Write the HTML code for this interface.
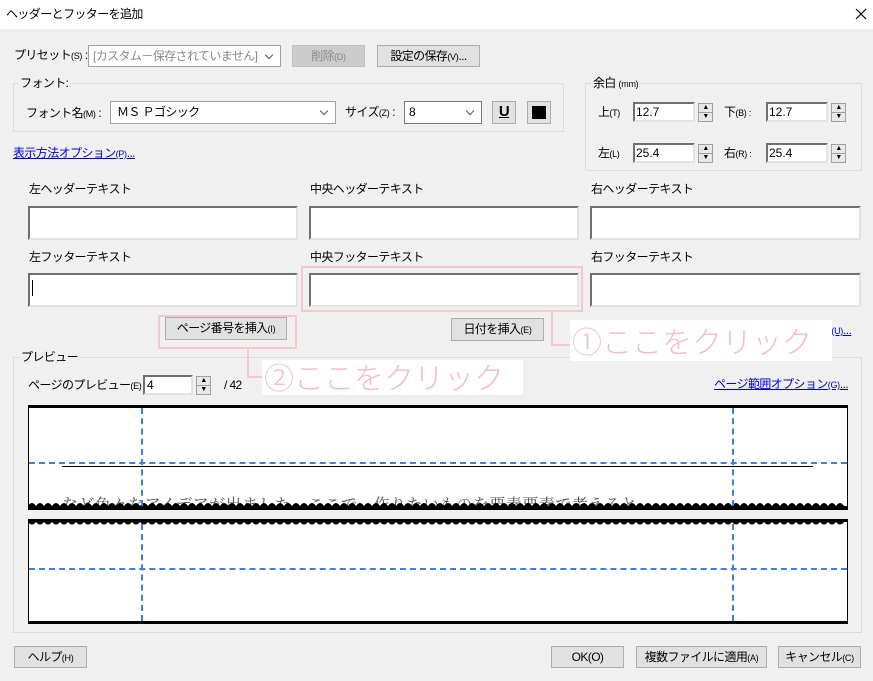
<!DOCTYPE html>
<html><head><meta charset="utf-8"><style>
*{box-sizing:border-box;margin:0;padding:0}
body{width:873px;height:681px;background:#f0f0f0;font-family:"Liberation Sans","Noto Sans CJK JP",sans-serif;font-size:12px;letter-spacing:-0.6px;color:#000;position:relative;overflow:hidden}
.a{position:absolute;white-space:nowrap}
.t{line-height:14px}
.s{font-size:9px;letter-spacing:-0.3px}
.inp{position:absolute;background:#fff;border-style:solid;border-width:2px;border-color:#707070 #e3e3e3 #e3e3e3 #707070;letter-spacing:0}
.sel{position:absolute;background:#fff;border:1px solid #a0a0a0;padding:2px 4px;line-height:16px}
.sel:after{content:"";position:absolute;right:8px;top:6px;width:5px;height:5px;border-right:1px solid #555;border-bottom:1px solid #555;transform:rotate(45deg)}
.btn{position:absolute;background:#e1e1e1;border:1px solid #adadad;text-align:center;line-height:20px}
.grp{position:absolute;border:1px solid #dcdcdc}
.leg{position:absolute;background:#f0f0f0;padding:0 2px;line-height:14px}
.lnk{color:#0000ee;text-decoration:underline}
.spin{position:absolute;width:15px;border:1px solid #a0a0a0;background:#e8e8e8}
.spin div{height:50%;border-bottom:1px solid #a0a0a0;font-size:7px;line-height:8px;text-align:center}
.spin div:last-child{border:none}
.ann{position:absolute;background:#fff;color:#f7bcc6;font-size:30px;line-height:40px;padding-left:2px;font-family:"Noto Sans CJK JP",sans-serif;font-weight:300;letter-spacing:0}
.pk{position:absolute;border:2px solid #f6c7cd}
.vd{position:absolute;width:0;border-left:2px dashed #3a80e8}
.hd{position:absolute;height:0;border-top:2px dashed #3a80e8}
</style></head><body>
<div class="a" style="left:0;top:0;width:873px;height:29px;background:#fff"></div>
<div class="a t" style="left:6px;top:7px">ヘッダーとフッターを追加</div>
<svg class="a" style="left:855px;top:8px" width="12" height="12"><path d="M1 1L11 11M11 1L1 11" stroke="#000" stroke-width="1.2"/></svg>

<div class="a t" style="left:14px;top:48px">プリセット<span class="s">(S)</span> :</div>
<div class="sel" style="left:88px;top:45px;width:193px;height:22px;color:#888">[カスタム－保存されていません]</div>
<div class="btn" style="left:292px;top:45px;width:73px;height:22px;background:#cccccc;border-color:#bfbfbf;color:#888">削除<span class="s">(D)</span></div>
<div class="btn" style="left:377px;top:45px;width:103px;height:22px">設定の保存<span class="s">(V)</span>...</div>

<div class="grp" style="left:13px;top:83px;width:551px;height:49px"></div>
<div class="leg" style="left:18px;top:76px">フォント:</div>
<div class="a t" style="left:26px;top:106px">フォント名<span class="s">(M)</span> :</div>
<div class="sel" style="left:110px;top:101px;width:226px;height:23px;padding-left:6px">ＭＳ Ｐゴシック</div>
<div class="a t" style="left:345px;top:105px">サイズ<span class="s">(Z)</span> :</div>
<div class="sel" style="left:404px;top:101px;width:78px;height:23px;border-color:#7a7a7a">8</div>
<div class="btn" style="left:492px;top:101px;width:24px;height:23px;font-weight:bold;font-size:15px;text-decoration:underline">U</div>
<div class="btn" style="left:527px;top:101px;width:24px;height:23px"><div style="position:absolute;left:4px;top:4px;width:14px;height:13px;background:#000"></div></div>
<div class="a t lnk" style="left:13px;top:146px">表示方法オプション<span class="s">(P)</span>...</div>

<div class="grp" style="left:585px;top:83px;width:277px;height:88px"></div>
<div class="leg" style="left:591px;top:76px">余白 <span class="s">(mm)</span></div>
<div class="a t" style="left:598px;top:105px">上<span class="s">(T)</span></div>
<div class="inp" style="left:633px;top:102px;width:62px;height:20px;padding-left:1px;line-height:16px">12.7</div>
<div class="spin" style="left:698px;top:103px;height:19px"><div>▲</div><div>▼</div></div>
<div class="a t" style="left:724px;top:105px">下<span class="s">(B) :</span></div>
<div class="inp" style="left:766px;top:102px;width:62px;height:20px;padding-left:1px;line-height:16px">12.7</div>
<div class="spin" style="left:831px;top:103px;height:19px"><div>▲</div><div>▼</div></div>
<div class="a t" style="left:598px;top:146px">左<span class="s">(L)</span></div>
<div class="inp" style="left:633px;top:143px;width:62px;height:20px;padding-left:1px;line-height:16px">25.4</div>
<div class="spin" style="left:698px;top:144px;height:19px"><div>▲</div><div>▼</div></div>
<div class="a t" style="left:724px;top:146px">右<span class="s">(R) :</span></div>
<div class="inp" style="left:766px;top:143px;width:62px;height:20px;padding-left:1px;line-height:16px">25.4</div>
<div class="spin" style="left:831px;top:144px;height:19px"><div>▲</div><div>▼</div></div>

<div class="a t" style="left:29px;top:182px">左ヘッダーテキスト</div>
<div class="a t" style="left:310px;top:182px">中央ヘッダーテキスト</div>
<div class="a t" style="left:591px;top:182px">右ヘッダーテキスト</div>
<div class="inp" style="left:28px;top:206px;width:270px;height:34px"></div>
<div class="inp" style="left:309px;top:206px;width:270px;height:34px"></div>
<div class="inp" style="left:590px;top:206px;width:271px;height:34px"></div>
<div class="a t" style="left:29px;top:250px">左フッターテキスト</div>
<div class="a t" style="left:310px;top:250px">中央フッターテキスト</div>
<div class="a t" style="left:591px;top:250px">右フッターテキスト</div>
<div class="inp" style="left:28px;top:273px;width:270px;height:34px"><div style="position:absolute;left:2px;top:5px;width:1px;height:16px;background:#000"></div></div>
<div class="inp" style="left:309px;top:273px;width:270px;height:34px"></div>
<div class="inp" style="left:590px;top:273px;width:271px;height:34px"></div>

<div class="a t lnk" style="left:820px;top:323px">式<span class="s">(U)</span>...</div>
<div class="btn" style="left:165px;top:317px;width:122px;height:23px;line-height:21px">ページ番号を挿入<span class="s">(I)</span></div>
<div class="btn" style="left:451px;top:318px;width:93px;height:23px;line-height:21px">日付を挿入<span class="s">(E)</span></div>

<div class="grp" style="left:13px;top:357px;width:849px;height:276px"></div>
<div class="leg" style="left:19px;top:350px">プレビュー</div>
<div class="a t" style="left:28px;top:378px">ページのプレビュー<span class="s">(E)</span></div>
<div class="inp" style="left:143px;top:375px;width:50px;height:20px;padding-left:2px;line-height:16px">4</div>
<div class="spin" style="left:196px;top:376px;height:19px"><div>▲</div><div>▼</div></div>
<div class="a t" style="left:224px;top:378px">/ 42</div>
<div class="a t lnk" style="left:714px;top:377px">ページ範囲オプション<span class="s">(G)</span>...</div>

<div class="a" style="left:28px;top:405px;width:820px;height:104px;background:#fff;border:1px solid #000;border-top:3px solid #000;border-bottom:none;overflow:hidden">
 <div class="a" style="left:33px;top:58px;width:751px;height:1px;background:#000"></div>
 <div class="a" style="left:33px;top:84px;font-size:16px;color:#555;font-family:'Noto Serif CJK SC',serif;letter-spacing:0.5px">など色々なアイデアが出ました。ここで、作りたいものを要素要素で考えると</div>
</div>
<svg class="a" style="left:28px;top:500px" width="820" height="10"><path d="M0 10 L0 6 Q4 0 8 6 Q12 0 16 6 Q20 0 24 6 Q28 0 32 6 Q36 0 40 6 Q44 0 48 6 Q52 0 56 6 Q60 0 64 6 Q68 0 72 6 Q76 0 80 6 Q84 0 88 6 Q92 0 96 6 Q100 0 104 6 Q108 0 112 6 Q116 0 120 6 Q124 0 128 6 Q132 0 136 6 Q140 0 144 6 Q148 0 152 6 Q156 0 160 6 Q164 0 168 6 Q172 0 176 6 Q180 0 184 6 Q188 0 192 6 Q196 0 200 6 Q204 0 208 6 Q212 0 216 6 Q220 0 224 6 Q228 0 232 6 Q236 0 240 6 Q244 0 248 6 Q252 0 256 6 Q260 0 264 6 Q268 0 272 6 Q276 0 280 6 Q284 0 288 6 Q292 0 296 6 Q300 0 304 6 Q308 0 312 6 Q316 0 320 6 Q324 0 328 6 Q332 0 336 6 Q340 0 344 6 Q348 0 352 6 Q356 0 360 6 Q364 0 368 6 Q372 0 376 6 Q380 0 384 6 Q388 0 392 6 Q396 0 400 6 Q404 0 408 6 Q412 0 416 6 Q420 0 424 6 Q428 0 432 6 Q436 0 440 6 Q444 0 448 6 Q452 0 456 6 Q460 0 464 6 Q468 0 472 6 Q476 0 480 6 Q484 0 488 6 Q492 0 496 6 Q500 0 504 6 Q508 0 512 6 Q516 0 520 6 Q524 0 528 6 Q532 0 536 6 Q540 0 544 6 Q548 0 552 6 Q556 0 560 6 Q564 0 568 6 Q572 0 576 6 Q580 0 584 6 Q588 0 592 6 Q596 0 600 6 Q604 0 608 6 Q612 0 616 6 Q620 0 624 6 Q628 0 632 6 Q636 0 640 6 Q644 0 648 6 Q652 0 656 6 Q660 0 664 6 Q668 0 672 6 Q676 0 680 6 Q684 0 688 6 Q692 0 696 6 Q700 0 704 6 Q708 0 712 6 Q716 0 720 6 Q724 0 728 6 Q732 0 736 6 Q740 0 744 6 Q748 0 752 6 Q756 0 760 6 Q764 0 768 6 Q772 0 776 6 Q780 0 784 6 Q788 0 792 6 Q796 0 800 6 Q804 0 808 6 Q812 0 816 6 L820 6 L820 10 Z" fill="#000"/></svg>
<div class="a" style="left:28px;top:520px;width:820px;height:104px;background:#fff;border:1px solid #000;border-bottom:3px solid #000;border-top:none"></div>
<svg class="a" style="left:28px;top:519px" width="820" height="8"><path d="M0 0 L820 0 L820 3 L816 3 Q812 8 808 3 Q804 8 800 3 Q796 8 792 3 Q788 8 784 3 Q780 8 776 3 Q772 8 768 3 Q764 8 760 3 Q756 8 752 3 Q748 8 744 3 Q740 8 736 3 Q732 8 728 3 Q724 8 720 3 Q716 8 712 3 Q708 8 704 3 Q700 8 696 3 Q692 8 688 3 Q684 8 680 3 Q676 8 672 3 Q668 8 664 3 Q660 8 656 3 Q652 8 648 3 Q644 8 640 3 Q636 8 632 3 Q628 8 624 3 Q620 8 616 3 Q612 8 608 3 Q604 8 600 3 Q596 8 592 3 Q588 8 584 3 Q580 8 576 3 Q572 8 568 3 Q564 8 560 3 Q556 8 552 3 Q548 8 544 3 Q540 8 536 3 Q532 8 528 3 Q524 8 520 3 Q516 8 512 3 Q508 8 504 3 Q500 8 496 3 Q492 8 488 3 Q484 8 480 3 Q476 8 472 3 Q468 8 464 3 Q460 8 456 3 Q452 8 448 3 Q444 8 440 3 Q436 8 432 3 Q428 8 424 3 Q420 8 416 3 Q412 8 408 3 Q404 8 400 3 Q396 8 392 3 Q388 8 384 3 Q380 8 376 3 Q372 8 368 3 Q364 8 360 3 Q356 8 352 3 Q348 8 344 3 Q340 8 336 3 Q332 8 328 3 Q324 8 320 3 Q316 8 312 3 Q308 8 304 3 Q300 8 296 3 Q292 8 288 3 Q284 8 280 3 Q276 8 272 3 Q268 8 264 3 Q260 8 256 3 Q252 8 248 3 Q244 8 240 3 Q236 8 232 3 Q228 8 224 3 Q220 8 216 3 Q212 8 208 3 Q204 8 200 3 Q196 8 192 3 Q188 8 184 3 Q180 8 176 3 Q172 8 168 3 Q164 8 160 3 Q156 8 152 3 Q148 8 144 3 Q140 8 136 3 Q132 8 128 3 Q124 8 120 3 Q116 8 112 3 Q108 8 104 3 Q100 8 96 3 Q92 8 88 3 Q84 8 80 3 Q76 8 72 3 Q68 8 64 3 Q60 8 56 3 Q52 8 48 3 Q44 8 40 3 Q36 8 32 3 Q28 8 24 3 Q20 8 16 3 Q12 8 8 3 Q4 8 0 3 Z" fill="#000"/></svg>
<div class="vd" style="left:141px;top:408px;height:98px"></div>
<div class="vd" style="left:732px;top:408px;height:98px"></div>
<div class="hd" style="left:29px;top:462px;width:818px"></div>
<div class="vd" style="left:141px;top:524px;height:97px"></div>
<div class="vd" style="left:732px;top:524px;height:97px"></div>
<div class="hd" style="left:29px;top:568px;width:818px"></div>

<div class="pk" style="left:301px;top:266px;width:282px;height:46px"></div>
<div class="a" style="left:551px;top:311px;width:21px;height:35px;border-left:2px solid #f6c7cd;border-bottom:2px solid #f6c7cd"></div>
<div class="ann" style="left:570px;top:320px;width:262px;height:41px">①ここをクリック</div>
<div class="pk" style="left:158px;top:315px;width:139px;height:34px"></div>
<div class="a" style="left:247px;top:348px;width:16px;height:30px;border-left:2px solid #f6c7cd;border-bottom:2px solid #f6c7cd"></div>
<div class="ann" style="left:262px;top:360px;width:261px;height:35px;line-height:33px">②ここをクリック</div>

<div class="btn" style="left:14px;top:646px;width:73px;height:22px">ヘルプ<span class="s">(H)</span></div>
<div class="btn" style="left:551px;top:646px;width:73px;height:22px">OK(O)</div>
<div class="btn" style="left:636px;top:646px;width:131px;height:22px">複数ファイルに適用<span class="s">(A)</span></div>
<div class="btn" style="left:778px;top:646px;width:83px;height:22px">キャンセル<span class="s">(C)</span></div>
</body></html>
